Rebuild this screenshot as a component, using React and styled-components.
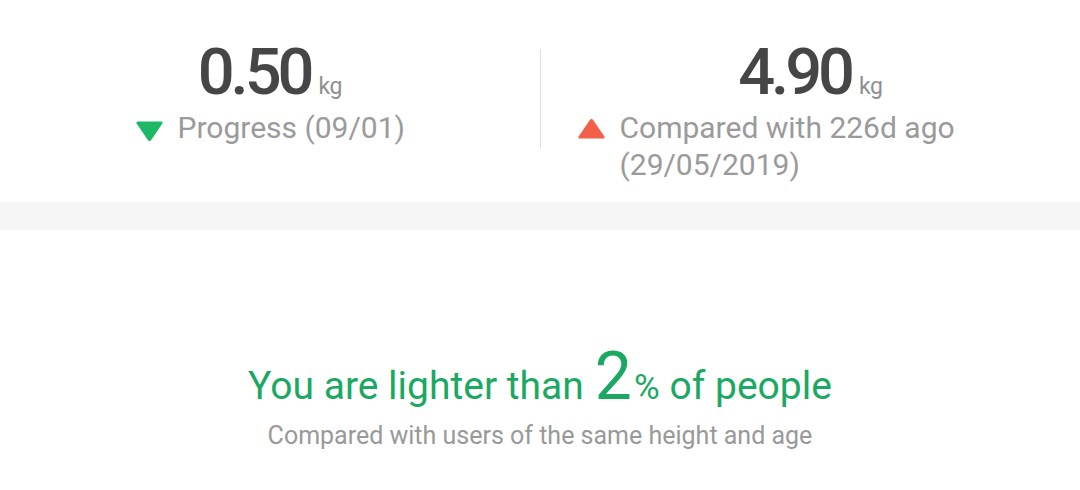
import React from "react";
import styled, { createGlobalStyle } from "styled-components";

const GlobalStyle = createGlobalStyle`
  html, body {
    margin: 0;
    padding: 0;
    background: #ffffff;
  }
  body {
    font-family: Roboto, "Noto Sans", sans-serif;
  }
`;

const Page = styled.div`
  width: 1080px;
  height: 490px;
  background: #fff;
  overflow: hidden;
`;

const Summary = styled.div`
  display: grid;
  grid-template-columns: 1fr 1px 1fr;
  padding-top: 36px;
  height: 166px;
  box-sizing: border-box;
`;

const Divider = styled.div`
  background: #dedede;
  margin-top: 13px;
  height: 99px;
`;

const Column = styled.div`
  display: flex;
  flex-direction: column;
  align-items: center;
  padding: 0 36px;
`;

const ValueRow = styled.div`
  display: flex;
  align-items: baseline;
  gap: 8px;
  color: #464646;
`;

const Value = styled.span`
  font-size: 65px;
  font-weight: 500;
  letter-spacing: -4px;
  line-height: 72px;
`;

const Unit = styled.span`
  font-size: 23px;
  color: #8f8f8f;
  letter-spacing: -0.5px;
`;

const Change = styled.div`
  display: flex;
  align-items: flex-start;
  gap: 14px;
  align-self: ${(p) => (p.$wide ? "stretch" : "center")};
  margin-top: 1px;
`;

const Arrow = styled.svg`
  flex: none;
  width: 29px;
  height: 22px;
  margin-top: ${(p) => (p.$up ? "9px" : "11px")};
`;

const ChangeText = styled.div`
  font-size: 30px;
  line-height: 37px;
  color: #9a9a9a;
`;

const Band = styled.div`
  height: 28px;
  background: #f6f6f6;
  margin-top: 36px;
`;

const Ranking = styled.div`
  display: flex;
  flex-direction: column;
  align-items: center;
  padding-top: 117px;
`;

const Headline = styled.div`
  display: flex;
  align-items: baseline;
  color: #1aa862;
  font-size: 39px;
`;

const Big = styled.span`
  font-size: 66px;
  font-weight: 400;
  line-height: 60px;
  margin: 0 2px 0 11px;
`;

const Percent = styled.span`
  font-size: 35px;
  margin-right: 10px;
`;

const Note = styled.div`
  margin-top: 12px;
  font-size: 25px;
  color: #999;
`;

const Down = () => (
  <Arrow viewBox="0 0 29 22">
    <path
      d="M3 1.5 H26 Q28.5 1.5 27.2 3.8 L16.2 20 Q14.5 22 12.8 20 L1.8 3.8 Q0.5 1.5 3 1.5 Z"
      fill="#1db866"
    />
  </Arrow>
);

const Up = () => (
  <Arrow $up viewBox="0 0 29 22">
    <path
      d="M3 20.5 H26 Q28.5 20.5 27.2 18.2 L16.2 2 Q14.5 0 12.8 2 L1.8 18.2 Q0.5 20.5 3 20.5 Z"
      fill="#f2604a"
    />
  </Arrow>
);

export default function App() {
  return (
    <Page>
      <GlobalStyle />
      <Summary>
        <Column>
          <ValueRow>
            <Value>0.50</Value>
            <Unit>kg</Unit>
          </ValueRow>
          <Change>
            <Down />
            <ChangeText>Progress (09/01)</ChangeText>
          </Change>
        </Column>
        <Divider />
        <Column>
          <ValueRow>
            <Value>4.90</Value>
            <Unit>kg</Unit>
          </ValueRow>
          <Change $wide>
            <Up />
            <ChangeText>Compared with 226d ago (29/05/2019)</ChangeText>
          </Change>
        </Column>
      </Summary>
      <Band />
      <Ranking>
        <Headline>
          You are lighter than
          <Big>2</Big>
          <Percent>%</Percent>
          of people
        </Headline>
        <Note>Compared with users of the same height and age</Note>
      </Ranking>
    </Page>
  );
}
